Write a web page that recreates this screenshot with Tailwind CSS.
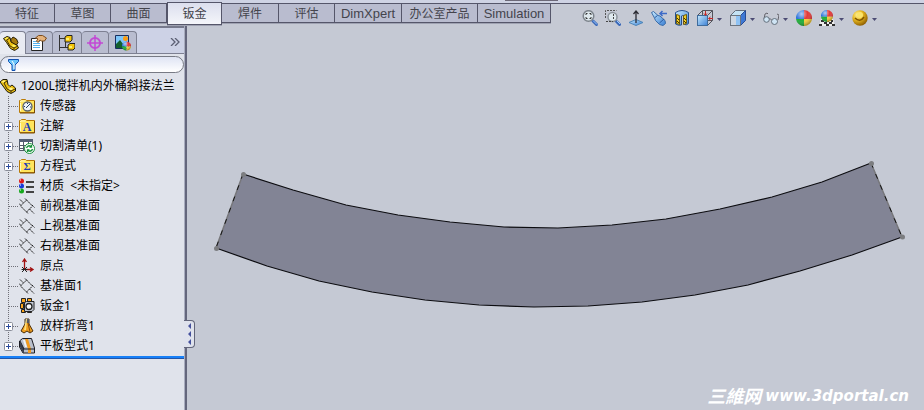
<!DOCTYPE html>
<html lang="zh-CN">

<head>
    <meta charset="UTF-8">
    <meta name="viewport" content="width=device-width, initial-scale=1.0">
    <title>1200L搅拌机内外桶斜接法兰</title>
    <script src="https://cdn.jsdelivr.net/npm/@tailwindcss/browser@4"></script>
</head>

<body class="min-h-screen flex flex-col bg-[#c5c9d4] text-black text-[12px] leading-5 font-['Noto_Sans','Noto_Sans_CJK_SC',sans-serif]">

    <!-- shared icons -->
    <svg class="absolute size-0">
        <defs>
            <linearGradient id="blue" x1="0" y1="0" x2="1" y2="1">
                <stop offset="0" stop-color="#c6eaff" />
                <stop offset="1" stop-color="#3c80d4" />
            </linearGradient>
            <radialGradient id="shine" cx="35%" cy="25%" r="75%">
                <stop offset="0" stop-color="#fff" stop-opacity=".65" />
                <stop offset=".5" stop-color="#fff" stop-opacity="0" />
                <stop offset="1" stop-color="#000" stop-opacity=".3" />
            </radialGradient>
            <radialGradient id="goldball" cx="35%" cy="30%" r="75%">
                <stop offset="0" stop-color="#fff6a0" />
                <stop offset=".45" stop-color="#e8b820" />
                <stop offset="1" stop-color="#8a5a00" />
            </radialGradient>
            <symbol id="part" viewBox="0 0 16 16">
                <path d="M.5 3.500L4 1.500l3 1 1 4 6 3.500 1.500 3-4 2.500-4-2-4-6z" fill="#ecbf12" stroke="#1e1a08" />
                <path d="M1.500 3.500L4 2.300l2 .7-2.500 1.500zM8 11l3-1.500 2.500 1.500-3 1.500z" fill="#fff05a" />
                <path d="M3.500 5l3.500 6 4 2v2M3.500 5L7 3M11 13l4-2" fill="none" stroke="#4b3600" />
                <path d="M8 4.500l2-2.500 3.500 2L15 7.500 13.500 10 8 7z" fill="#a87c10" stroke="#2a2008" />
            </symbol>
            <symbol id="tree-part" viewBox="0 0 16 16">
                <path d="M0 4l3-2.500h4l1 5 2 2 2-1.500 3.500 3v3L11 15.500l-4-2L3 8z" fill="#ecbf12" stroke="#1e1a08" />
                <path d="M1 4l2.500-1.500h2L4 4.500zM8 11l3-1.500 2.500 1.500-3 1.500z" fill="#fff58a" />
                <path d="M4 5l3 6 4 2v2M4 5l3-2M11 13l4-2" fill="none" stroke="#403008" />
            </symbol>
            <symbol id="folder" viewBox="0 0 16 16">
                <path d="M.5 14.500v-12h1l1-1h4l1 1h8v12z" fill="#ffe45c" stroke="#b97a08" />
                <path d="M1.500 4V3h5M1.500 13V5" fill="none" stroke="#fff9c4" />
                <path d="M15.500 3v12H1" fill="none" stroke="#7a4a00" />
            </symbol>
            <symbol id="plane" viewBox="0 0 16 16">
                <path d="M7.500 2l6 6-6 6-6-6zM1 1.500L4.500 5M10.500 11l4.500 4.500M0 5.500l2 2M6 .5L8 2.500M7.500 14L9 15.500M13 7l2.500 2.500" fill="none" stroke="#202020" stroke-dasharray="2 .5" />
            </symbol>
            <symbol id="ball" viewBox="0 0 16 16">
                <path d="M8 9V0a8 8 0 0 0-8 9z" fill="#2d73dc" />
                <path d="M8 9V0a8 8 0 0 1 8 9z" fill="#e23a3a" />
                <path d="M8 9H0a8 8 0 0 0 8 7z" fill="#20ae38" />
                <path d="M8 9h8a8 8 0 0 1-8 7z" fill="#f7cf3c" />
                <circle cx="8" cy="8" r="8" fill="url(#shine)" />
            </symbol>
            <symbol id="branch" viewBox="0 0 19 20">
                <path d="M8.500 0v20M9 10.500h9" fill="none" stroke="#707078" stroke-dasharray="1 1" />
            </symbol>
            <symbol id="expand" viewBox="0 0 19 20">
                <path d="M8.500 0v20M13 10.500h6" fill="none" stroke="#707078" stroke-dasharray="1 1" />
                <rect x="4.500" y="6.500" width="8" height="8" rx="1" fill="#fff" stroke="#8a8e9a" />
                <path d="M6 10.500h5M8.500 8v5" stroke="#2c4a9c" />
            </symbol>
            <symbol id="expand-last" viewBox="0 0 19 20">
                <path d="M8.500 0v7M13 10.500h6" fill="none" stroke="#707078" stroke-dasharray="1 1" />
                <rect x="4.500" y="6.500" width="8" height="8" rx="1" fill="#fff" stroke="#8a8e9a" />
                <path d="M6 10.500h5M8.500 8v5" stroke="#2c4a9c" />
            </symbol>
            <symbol id="caret" viewBox="0 0 7 16">
                <path d="M1 8h5L3.500 11z" fill="#4c4c74" />
            </symbol>
        </defs>
    </svg>

    <!-- command tabs + view toolbar -->
    <header class="h-[26px] flex items-start">
        <div class="absolute inset-x-0 top-0 h-1 bg-[#cfd3e4] border-b border-[#55566a]"></div>
        <div class="absolute left-[505px] top-0 w-[53px] h-px bg-[#6c6878]"></div>
        <nav class="relative z-10 mt-[3px] flex text-[#44444c] leading-5 font-['Liberation_Sans','Noto_Sans_CJK_SC',sans-serif] *:h-5 *:border-y *:border-r *:border-[#55566a] *:bg-[#b9bccf] *:shadow-[0_1px_0_#9fa2b2]">
            <button class="w-[55px]">特征</button>
            <button class="w-14">草图</button>
            <button class="w-14">曲面</button>
            <button class="-mt-px w-[55px] h-[23px]! bg-linear-to-b from-[#dcdfee] to-[#f4f5fa] border-l">钣金</button>
            <button class="w-[57px]">焊件</button>
            <button class="w-14">评估</button>
            <button class="w-[67px] text-[13px]">DimXpert</button>
            <button class="w-[76px]">办公室产品</button>
            <button class="w-[73px] text-[13px]">Simulation</button>
        </nav>
        <div class="ml-auto mt-[10px] pr-[46px] flex gap-[7px]">
            <button aria-label="整屏显示全图">
                <svg class="size-4" viewBox="0 0 16 16">
                    <path d="M11 11l3.500 3.500" stroke="#3a68b8" stroke-width="3" stroke-linecap="round" />
                    <path d="M11 10.500l4 4" stroke="#9cc8ff" />
                    <circle cx="6.500" cy="6" r="5.300" fill="#dfe9ee" stroke="#7d848c" stroke-width="1.500" />
                    <path d="M4 5V3.500h1.500M7.500 3.500H9V5M9 7v1.500H7.500M5.500 8.500H4V7" fill="none" stroke="#333" />
                </svg>
            </button>
            <button aria-label="局部放大">
                <svg class="size-4" viewBox="0 0 16 16">
                    <path d="M.5 8V.5h11" fill="none" stroke="#555" stroke-dasharray="2 1" />
                    <path d="M11.500 11.500l3 3" stroke="#3a68b8" stroke-width="3" stroke-linecap="round" />
                    <path d="M12 11l3 3" stroke="#9cc8ff" />
                    <circle cx="7.500" cy="7" r="4.500" fill="#dfe9ee" stroke="#8d949c" stroke-width="1.500" />
                    <path d="M1 11.500h7M8.500 4v5" fill="none" stroke="#444" stroke-dasharray="2 1" />
                </svg>
            </button>
            <button aria-label="正视于">
                <svg class="size-4" viewBox="0 0 16 16">
                    <path d="M1 12.500l7-3 7 3-7 3z" fill="url(#blue)" stroke="#4e86b8" />
                    <path d="M8 13V1M5.500 4L8 1l2.500 3" fill="none" stroke="#2c2c34" stroke-width="1.300" />
                </svg>
            </button>
            <button aria-label="上一视图">
                <svg class="size-4" viewBox="0 0 16 16">
                    <path d="M.5 2.500l2-1 4.500 4 2 .5 5 4.500.5 3-2.500 2-3.500-1-4-4-1-2.500z" fill="url(#blue)" stroke="#3a6ca8" />
                    <path d="M4 7.500l2.500-2M8.500 13l4.500-4" stroke="#2a5aa0" />
                    <path d="M9 3.500h7M11.500 1L9 3.500 11.500 6" fill="none" stroke="#3d6bc8" stroke-width="1.500" />
                </svg>
            </button>
            <button aria-label="剖面视图">
                <svg class="size-4" viewBox="0 0 16 16">
                    <path d="M1.500 2.500q6.500-4 13 0v11q-2 2-4 1V6q-2-1-3 0v9q-3 1-6-1z" fill="url(#blue)" stroke="#26508e" />
                    <path d="M2.500 4.500l3 1v9l-3-1zM9.500 5.500l3-1v9l-3 1z" fill="#f4d024" stroke="#6c5a10" />
                    <path d="M3 8l2 2M3 11l2 2M10 8l2 2M10 11l2 2" stroke="#443600" />
                </svg>
            </button>
            <button aria-label="视图定向" class="flex gap-[3px]">
                <svg class="size-4" viewBox="0 0 16 16">
                    <path d="M.5 5.500l5-5h10v10l-5 5M5.500.5v5M15.500.5l-5 5M15.500 10.500h-5" fill="none" stroke="#54545c" />
                    <rect x=".5" y="5.500" width="10" height="10" fill="url(#blue)" stroke="#3f6c9c" />
                    <path d="M8.500 1v4M7 3.500l1.500 2 1.500-2M16 8.500h-4M13.500 7l-2 1.500 2 1.500" fill="none" stroke="#c42828" />
                </svg>
                <svg class="w-[7px] h-4"><use href="#caret" /></svg>
            </button>
            <button aria-label="显示样式" class="flex gap-[3px]">
                <svg class="size-4" viewBox="0 0 16 16">
                    <path d="M.5 5.500l5-5h10l-5 5z" fill="#c4e2f4" stroke="#666e7c" />
                    <path d="M10.500 5.500l5-5v10l-5 5z" fill="#3e78d4" stroke="#284c94" />
                    <rect x=".5" y="5.500" width="10" height="10" fill="#ced7e2" stroke="#6c7480" />
                    <path d="M6 6h4v9H6z" fill="#8ec2f4" />
                </svg>
                <svg class="w-[7px] h-4"><use href="#caret" /></svg>
            </button>
            <button aria-label="隐藏/显示项目" class="flex gap-[3px]">
                <svg class="size-4" viewBox="0 0 16 16">
                    <path d="M1 9l1-5 2-1 1 1M6 9q1.500-1 2.500 1M15 10l1-5-2-1" fill="none" stroke="#64646c" />
                    <circle cx="3.500" cy="9.500" r="2.800" fill="#cfe4f4" stroke="#64707c" />
                    <circle cx="11.500" cy="11.500" r="3" fill="#cfe4f4" stroke="#64707c" />
                </svg>
                <svg class="w-[7px] h-4"><use href="#caret" /></svg>
            </button>
            <button aria-label="编辑外观">
                <svg class="size-4"><use href="#ball" /></svg>
            </button>
            <button aria-label="应用布景" class="flex gap-[3px]">
                <svg class="size-4" viewBox="0 0 16 16">
                    <path d="M2 9h12l2 7H0z" fill="#eee" />
                    <path d="M2 10h3v2H2zM8 10h2v2H8zM12 10h2v2h-2zM0 14h3v2H0zM5 12h3v2H5zM10 12h3v2h-3zM7 14h3v2H7zM13 14h3v2h-3z" fill="#333" />
                    <use href="#ball" x="2" y="0" width="12" height="12" />
                </svg>
                <svg class="w-[7px] h-4"><use href="#caret" /></svg>
            </button>
            <button aria-label="视图设定" class="flex gap-[3px]">
                <svg class="size-4" viewBox="0 0 16 16">
                    <circle cx="8" cy="8" r="7.700" fill="url(#goldball)" />
                    <path d="M3 8q5 5 9-1" fill="none" stroke="#805600" stroke-width="1.500" />
                    <circle cx="8" cy="5" r="3" fill="#fbe36a" />
                </svg>
                <svg class="w-[7px] h-4"><use href="#caret" /></svg>
            </button>
        </div>
    </header>

    <div class="flex-1 flex">

        <!-- feature manager -->
        <aside class="relative w-[187px] shrink-0 bg-[#e0e3eb] border-r-2 border-[#64667c] shadow-[inset_-1px_0_0_#a9adbf]">
            <div class="mr-px h-7 pt-1 flex items-end bg-[#cdd2e6] border-t-2 border-b border-t-[#76798c] border-b-[#7d8092] *:h-[22px] *:flex *:items-center *:justify-center *:rounded-t *:border-t *:border-r *:border-[#7d8092]">
                <button aria-label="特征管理" class="-mb-px w-[26px] h-[23px]! pr-1 bg-[#e9ebf2]">
                    <svg class="size-4"><use href="#part" /></svg>
                </button>
                <button aria-label="属性管理" class="w-[27px] bg-[#b9bdd0]">
                    <svg class="size-4" viewBox="0 0 16 16">
                        <path d="M.5 3.500h11v12H.5z" fill="#fff" stroke="#222" />
                        <path d="M2 6.500h7M2 8.500h7M2 10.500h7M2 12.500h7" stroke="#55b0ea" />
                        <path d="M4.500 3l3-2.500h4l4 2.500-2 3h-3L9 5 7 7.500 5.500 6 7 4z" fill="#e4b27c" stroke="#7d4c1c" />
                    </svg>
                </button>
                <button aria-label="配置管理" class="w-[29px] bg-[#b9bdd0]">
                    <svg class="size-4" viewBox="0 0 16 16">
                        <path d="M.5 0v16M1 3.500h6M1 12.500h9M6.500 4v8" fill="none" stroke="#333" />
                        <path d="M6 2l2-1.500h5V5l-2 2H6zM9 10l2-1.500h5V13l-2 2H9z" fill="#f4c50c" stroke="#222" />
                        <path d="M7 3h3v2H7zM10 11h3v2h-3z" fill="#fff06c" />
                    </svg>
                </button>
                <button aria-label="尺寸管理" class="w-[27px] bg-[#b9bdd0]">
                    <svg class="size-4" viewBox="0 0 16 16">
                        <circle cx="8" cy="8" r="5" fill="none" stroke="#c24ad4" stroke-width="2" />
                        <path d="M8 0v16M0 8h16" stroke="#c24ad4" stroke-width="1.500" />
                    </svg>
                </button>
                <button aria-label="显示管理" class="w-7 bg-[#b9bdd0]">
                    <svg class="size-4" viewBox="0 0 16 16">
                        <path d="M.5.500h13v13H.5z" fill="#7cc4f8" stroke="#172e60" />
                        <path d="M1 13V9l4-4 6 8z" fill="#135f2e" />
                        <circle cx="10.500" cy="3.500" r="2.500" fill="#fb9c14" />
                        <use href="#ball" x="7" y="6" width="9" height="10" />
                    </svg>
                </button>
                <span class="ml-auto pr-1 border-0!">
                    <svg class="w-[10px] h-2" viewBox="0 0 10 8">
                        <path d="M1 0l4 4-4 4M5 0l4 4-4 4" fill="none" stroke="#5c6074" stroke-width="1.300" />
                    </svg>
                </span>
            </div>

            <label class="mt-0.5 mr-px mb-[3px] h-[17px] px-[7px] flex items-center rounded-full border border-[#777a84] bg-linear-to-b from-[#dfe4f4] to-white">
                <svg class="w-[11px] h-3 shrink-0" viewBox="0 0 11 12">
                    <path d="M.5.500h10v2L7 6v5.500H4V6L.5 2.500z" fill="#68c4fa" stroke="#1250b0" />
                    <path d="M4 2l2 3v5" fill="none" stroke="#fff" />
                </svg>
                <input type="text" aria-label="过滤" class="w-full outline-none">
            </label>

            <ul class="mr-px border-b-2 border-[#1780f8] shadow-[0_1px_0_#2456a8] whitespace-nowrap *:flex *:items-center *:h-5">
                <li class="gap-[5px]">
                    <svg class="size-4"><use href="#tree-part" /></svg>
                    1200L搅拌机内外桶斜接法兰
                </li>
                <li>
                    <svg class="w-[19px] h-5"><use href="#branch" /></svg>
                    <svg class="size-4 mr-[5px]" viewBox="0 0 16 16">
                        <use href="#folder" />
                        <circle cx="8.500" cy="8.500" r="4.500" fill="#eef3f8" stroke="#59616b" stroke-width="1.300" />
                        <path d="M7 10l4-4M8.500 5v1M5 8.500h1M11 9h1" stroke="#223f66" />
                    </svg>
                    传感器
                </li>
                <li>
                    <svg class="w-[19px] h-5"><use href="#expand" /></svg>
                    <svg class="size-4 mr-[5px]" viewBox="0 0 16 16">
                        <use href="#folder" />
                        <text x="8" y="13" text-anchor="middle" font-family="Liberation Serif" font-size="12" font-weight="bold" fill="#1c3cb8">A</text>
                    </svg>
                    注解
                </li>
                <li>
                    <svg class="w-[19px] h-5"><use href="#expand" /></svg>
                    <svg class="size-4 mr-[5px]" viewBox="0 0 16 16">
                        <path d="M.5 1.500h13v11H.5z" fill="#fff" stroke="#535b68" />
                        <path d="M0 1h14v3H0z" fill="#535f74" />
                        <path d="M0 7.500h14M0 10.500h14M4.500 4v9M9.500 4v9" stroke="#535b68" />
                        <circle cx="10.500" cy="10.500" r="5" fill="#fff" stroke="#159038" />
                        <path d="M7.500 10q1-3 4-2l1 1M13.500 11q-1 3-4 2l-1-1M12.500 7v2h-2M8.500 14v-2h2" fill="none" stroke="#159038" stroke-width="1.300" />
                    </svg>
                    切割清单(1)
                </li>
                <li>
                    <svg class="w-[19px] h-5"><use href="#expand" /></svg>
                    <svg class="size-4 mr-[5px]" viewBox="0 0 16 16">
                        <use href="#folder" />
                        <text x="8" y="12" text-anchor="middle" font-family="Liberation Serif" font-size="11" font-weight="bold" fill="#1c3cb8">Σ</text>
                    </svg>
                    方程式
                </li>
                <li>
                    <svg class="w-[19px] h-5"><use href="#branch" /></svg>
                    <svg class="size-4 mr-[5px]" viewBox="0 0 16 16">
                        <circle cx="2.500" cy="3" r="2.500" fill="#e01818" />
                        <circle cx="2.500" cy="8" r="2.500" fill="#1838d8" />
                        <circle cx="2.500" cy="13" r="2.500" fill="#14a81c" />
                        <path d="M1 2h1M1 7h1M1 12h1" stroke="#fff" />
                        <path d="M7 4h8M7 9h8M7 14h8" stroke="#444" stroke-width="2" />
                    </svg>
                    <span>材质&nbsp; &lt;未指定&gt;</span>
                </li>
                <li>
                    <svg class="w-[19px] h-5"><use href="#branch" /></svg>
                    <svg class="size-4 mr-[5px]"><use href="#plane" /></svg>
                    前视基准面
                </li>
                <li>
                    <svg class="w-[19px] h-5"><use href="#branch" /></svg>
                    <svg class="size-4 mr-[5px]"><use href="#plane" /></svg>
                    上视基准面
                </li>
                <li>
                    <svg class="w-[19px] h-5"><use href="#branch" /></svg>
                    <svg class="size-4 mr-[5px]"><use href="#plane" /></svg>
                    右视基准面
                </li>
                <li>
                    <svg class="w-[19px] h-5"><use href="#branch" /></svg>
                    <svg class="size-4 mr-[5px]" viewBox="0 0 16 16">
                        <path d="M5.500 11V2M3.500 4l2-3 2 3M6 11.500h7M11 9.500l3 2-3 2" fill="none" stroke="#a01010" stroke-width="1.300" />
                        <path d="M3 9l5 5M8 9l-5 5M2.500 11.500h6" stroke="#222" />
                    </svg>
                    原点
                </li>
                <li>
                    <svg class="w-[19px] h-5"><use href="#branch" /></svg>
                    <svg class="size-4 mr-[5px]"><use href="#plane" /></svg>
                    基准面1
                </li>
                <li>
                    <svg class="w-[19px] h-5"><use href="#branch" /></svg>
                    <svg class="size-4 mr-[5px]" viewBox="0 0 16 16">
                        <path d="M2.500.500h4v4h-4zM8.500.500h4v4h-4zM1.500 5.500h3v5h-3zM2.500 11.500h4v3h-4zM8.500 11.500h4v3h-4z" fill="#f8a41c" stroke="#222" />
                        <path d="M5.500 4.500l2-1h7.500v8l-2 2H5.500z" fill="#c4cad6" stroke="#222" />
                        <circle cx="10" cy="8.500" r="3" fill="#f4f6fa" stroke="#222" stroke-width="1.300" />
                    </svg>
                    钣金1
                </li>
                <li>
                    <svg class="w-[19px] h-5"><use href="#expand" /></svg>
                    <svg class="size-4 mr-[5px]" viewBox="0 0 16 16">
                        <path d="M6 1h4v5l4 7-3 2-3-2-3 2-3-2 4-7z" fill="#f0a020" stroke="#4c2e08" />
                        <path d="M6 1h4v4H6z" fill="#535966" />
                        <path d="M7 1h1L7 12H5z" fill="#ffe27c" />
                        <path d="M9 5l2 9" stroke="#8a4c08" />
                    </svg>
                    放样折弯1
                </li>
                <li>
                    <svg class="w-[19px] h-5"><use href="#expand-last" /></svg>
                    <svg class="size-4 mr-[5px]" viewBox="0 0 16 16">
                        <path d="M.5 3l3-2.500h9l3 9.500v5H4L.5 9z" fill="#b9bfcc" stroke="#1c1c24" />
                        <path d="M1 4l4 7v4H4L1 9z" fill="#3c404c" />
                        <path d="M6 1h3l3 10v4H9v-4z" fill="#f39a1c" />
                        <path d="M4 11h11M1 3l4 8" fill="none" stroke="#1c1c24" />
                        <path d="M4 2h2l2 7H6z" fill="#f2f4f8" />
                    </svg>
                    平板型式1
                </li>
            </ul>

            <!-- collapse handle -->
            <button aria-label="折叠面板" class="absolute -right-[10px] top-[294px] w-[11px] h-7 flex flex-col items-center justify-evenly rounded-r border border-l-0 border-[#62657a] bg-[#dfe2ec]">
                <svg class="w-1 h-[22px]" viewBox="0 0 4 22">
                    <path d="M4 0v6L1 3zM4 8v6l-3-3zM4 16v6l-3-3z" fill="#44509c" />
                </svg>
            </button>
        </aside>

        <!-- graphics area -->
        <main class="relative flex-1 min-w-0">
            <svg class="w-full" viewBox="187 26 737 350">
                <path d="M243 174L293 190 346 205 398 215 450 222 504 227 558 228 612 225 666 219 720 209 772 197 822 182 871 163 902 237 852 255 800 271 748 285 695 295 642 302 588 306 534 307 479 305 425 300 372 292 319 281 267 266 216 248z" fill="#828495" />
                <path d="M243 174L293 190 346 205 398 215 450 222 504 227 558 228 612 225 666 219 720 209 772 197 822 182 871 163M902 237L852 255 800 271 748 285 695 295 642 302 588 306 534 307 479 305 425 300 372 292 319 281 267 266 216 248" fill="none" stroke="#0c0c10" stroke-width="1.200" />
                <path d="M243 174L216 248M871 163L902 237" fill="none" stroke="#77777b" stroke-width="1.500" />
                <path d="M243 174L216 248M871 163L902 237" fill="none" stroke="#111" stroke-dasharray="5 7" />
                <g fill="#7c7d80">
                    <circle cx="243.500" cy="174.500" r="2.500" />
                    <circle cx="871.500" cy="163.500" r="2.500" />
                    <circle cx="216.500" cy="248.500" r="2.500" />
                    <circle cx="902.500" cy="237" r="2.500" />
                </g>
            </svg>
            <p class="absolute right-[15px] bottom-1 flex items-center gap-1 italic font-bold text-white whitespace-nowrap">
                <span class="text-[18px]">三維网</span>
                <span class="text-[15px] font-['DejaVu_Sans',sans-serif]">www.3dportal.cn</span>
            </p>
        </main>
    </div>

</body>

</html>
